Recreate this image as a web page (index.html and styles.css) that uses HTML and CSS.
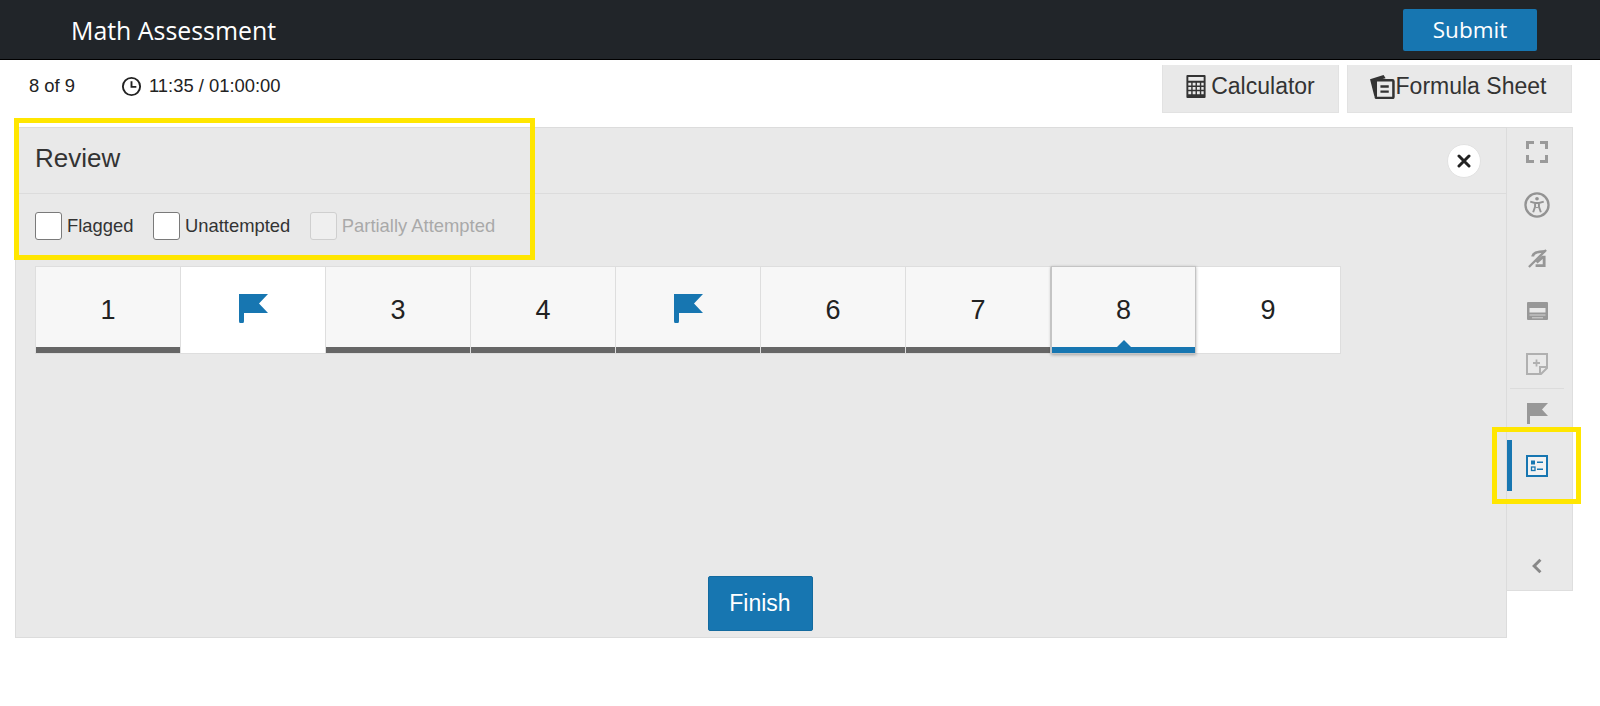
FILE: index.html
```html
<!DOCTYPE html>
<html lang="en">
<head>
<meta charset="UTF-8">
<title>Math Assessment</title>
<link rel="stylesheet" href="styles.css">
</head>
<body>
	<header class="topbar">
		<h1 class="test-name">Math Assessment</h1>
		<button class="btn-submit">Submit</button>
	</header>

	<div class="toolbar">
		<div class="progress">
			<span class="count">8 of 9</span>
			<svg class="clock" viewBox="0 0 20 20"><circle cx="10" cy="10" r="8.2" fill="none" stroke="#222" stroke-width="1.8"/><path d="M10 5v5.400h4.600" fill="none" stroke="#222" stroke-width="1.8"/></svg>
			<span>11:35 / 01:00:00</span>
		</div>
		<div class="tools">
			<button class="tool-btn calc">
				<svg class="tool-icon" viewBox="0 0 20 24"><path fill="#333" fill-rule="evenodd" d="M1 0h18a1 1 0 0 1 1 1v22a1 1 0 0 1-1 1H1a1 1 0 0 1-1-1V1a1 1 0 0 1 1-1zm1 2v4h16V2zm0 6v3h3V8zm4.500 0v3h3V8zm4.500 0v3h3V8zm4.500 0v3H18V8zM2 12.500v3h3v-3zm4.500 0v3h3v-3zm4.500 0v3h3v-3zm4.500 0v3H18v-3zM2 17v3h3v-3zm4.500 0v3h3v-3zm4.500 0v3h3v-3zm4.500 0v3H18v-3z"/></svg>
				Calculator
			</button>
			<button class="tool-btn formula">
				<svg class="tool-icon wide" viewBox="0 0 25 24"><path fill="#333" d="M1 5l13-4 2 3-10 2.500V21H5z"/><rect x="6.500" y="6" width="17" height="17" rx="1" fill="#e9e9e9" stroke="#333" stroke-width="2.400"/><path d="M11 12h8M11 17h8" stroke="#333" stroke-width="2.200"/></svg>
				Formula Sheet
			</button>
		</div>
	</div>

	<div class="workspace">
		<section class="review">
			<div class="review-head">
				<h2>Review</h2>
				<button class="close">
					<svg viewBox="0 0 14 14"><path d="M2 2l10 10M12 2L2 12" stroke="#222" stroke-width="3" stroke-linecap="round"/></svg>
				</button>
			</div>
			<div class="filters">
				<label class="filter"><span class="box"></span>Flagged</label>
				<label class="filter"><span class="box"></span>Unattempted</label>
				<label class="filter off"><span class="box"></span>Partially Attempted</label>
			</div>
			<div class="tiles">
				<div class="tile done">1</div>
				<div class="tile"><svg class="flag" viewBox="0 0 29 29"><path fill="#1776b1" d="M0 0h29l-9 9.500 9 9.500H5v8a2.500 2.500 0 0 1-5 0z"/></svg></div>
				<div class="tile done">3</div>
				<div class="tile done">4</div>
				<div class="tile done"><svg class="flag" viewBox="0 0 29 29"><path fill="#1776b1" d="M0 0h29l-9 9.500 9 9.500H5v8a2.500 2.500 0 0 1-5 0z"/></svg></div>
				<div class="tile done">6</div>
				<div class="tile done">7</div>
				<div class="tile current">8</div>
				<div class="tile">9</div>
			</div>
			<div class="finish-row">
				<button class="btn-finish">Finish</button>
			</div>
		</section>

		<aside class="rail">
			<div class="rail-item">
				<svg viewBox="0 0 22 22" fill="none" stroke="#9a9a9a" stroke-width="3"><path d="M1.500 8V1.500H8M14 1.500h6.500V8M1.500 14v6.500H8M14 20.500h6.500V14"/></svg>
			</div>
			<div class="rail-item">
				<svg class="big" viewBox="0 0 27 27"><circle cx="13.500" cy="13.500" r="12" fill="none" stroke="#939393" stroke-width="2.400"/><circle cx="13.500" cy="7" r="1.900" fill="#939393"/><path d="M6.500 10l5 1.500v4L9.500 21M20.500 10l-5 1.500v4l2 5.500M11.500 11.500h4M13.500 15.500v1" fill="none" stroke="#939393" stroke-width="2"/></svg>
			</div>
			<div class="rail-item">
				<svg class="slim" viewBox="0 0 20 20" fill="none" stroke="#969696"><path d="M5 8C5 4 9 2.500 18 2.500" stroke-width="3"/><path d="M1 19L19 1" stroke-width="2.400"/><path d="M8 17.500h9V7M9 14l7-6" stroke-width="3"/></svg>
			</div>
			<div class="rail-item">
				<svg class="wide" viewBox="0 0 21 18"><rect width="21" height="18" rx="1" fill="#989898"/><rect x="2.500" y="6" width="16" height="4.500" fill="#e9e9e9"/><path d="M2.500 13h16M5 15.800h11" stroke="#d4d4d4" stroke-width="1"/></svg>
			</div>
			<div class="rail-item">
				<svg viewBox="0 0 22 22" fill="none" stroke="#b0b0b0" stroke-width="2"><path d="M1 1h20v14l-6 6H1zM21 14h-7v7"/><path d="M10.500 6.500v7M7 10h7" stroke-width="1.800"/></svg>
			</div>
			<div class="rail-item flagged">
				<svg viewBox="0 0 21 21"><path fill="#989898" d="M0 0h21l-6 6.500 6 6.500H3v8H0z"/></svg>
			</div>
			<div class="rail-item active">
				<svg viewBox="0 0 22 22"><rect x="1" y="1" width="20" height="20" fill="#f2f2f2" stroke="#1776b1" stroke-width="2"/><path fill="#1776b1" d="M5 5.500h4v4H5zM11 6.500h6v1.500h-6zM11 13.500h6V15h-6z"/><rect x="5.500" y="12" width="3.500" height="3.500" fill="none" stroke="#1776b1" stroke-width="1.300"/></svg>
			</div>
			<div class="rail-item collapse">
				<svg viewBox="0 0 10 14" fill="none" stroke="#888" stroke-width="2.600"><path d="M8 1.500L2.500 7 8 12.500"/></svg>
			</div>
		</aside>
	</div>

	<div class="callout callout-review"></div>
	<div class="callout callout-rail"></div>
</body>
</html>
```

FILE: styles.css
```css
* {
	box-sizing: border-box;
}
body {
	margin: 0;
	background-color: #fff;
	color: #222;
	font-family: "Liberation Sans", Arial, sans-serif;
	overflow: hidden;
}
button {
	font-family: inherit;
	cursor: pointer;
}

/* top bar */
.topbar {
	height: 60px;
	background-color: #212529;
	border-bottom: 1px solid #000;
	display: flex;
	align-items: center;
	justify-content: space-between;
	padding: 0 63px 0 71px;
}
.test-name {
	margin: 0;
	color: #fff;
	font-family: "Open Sans", sans-serif;
	font-size: 24.9px;
	font-weight: 400;
}
.btn-submit {
	width: 134px;
	height: 42px;
	border: none;
	border-radius: 2px;
	background-color: #1776b1;
	color: #fff;
	font-family: "Open Sans", sans-serif;
	font-size: 22.5px;
}

/* progress and tools */
.toolbar {
	height: 67px;
	display: flex;
	justify-content: space-between;
	padding: 0 28px 0 29px;
}
.progress {
	height: 52px;
	display: flex;
	align-items: center;
	font-size: 18.4px;
}
.count {
	width: 92px;
}
.clock {
	width: 21px;
	height: 21px;
	margin-right: 7px;
}
.tools {
	display: flex;
	gap: 8px;
}
.tool-btn {
	height: 48px;
	margin-top: 5px;
	padding: 0 0 5px;
	border: 1px solid #e2e2e2;
	border-top: none;
	background-color: #e9e9e9;
	color: #333;
	font-size: 23px;
	display: flex;
	align-items: center;
	justify-content: center;
}
.calc {
	width: 177px;
}
.formula {
	width: 225px;
	padding-right: 4px;
}
.tool-icon {
	width: 20px;
	height: 23px;
	margin-right: 5px;
}
.tool-icon.wide {
	width: 26px;
	height: 25px;
	margin-right: 1px;
}

/* review panel */
.workspace {
	display: flex;
	align-items: flex-start;
	padding-left: 15px;
}
.review {
	width: 1492px;
	height: 511px;
	background-color: #e9e9e9;
	border: 1px solid #dcdcdc;
	display: flex;
	flex-direction: column;
}
.review-head {
	height: 66px;
	padding: 0 25px 5px 19px;
	border-bottom: 1px solid #dcdcdc;
	display: flex;
	align-items: center;
	justify-content: space-between;
}
.review-head h2 {
	margin: 0;
	color: #333;
	font-size: 26px;
	font-weight: 400;
}
.close {
	width: 34px;
	height: 34px;
	margin-top: 5px;
	padding: 9px;
	border: 1px solid #e2e2e2;
	border-radius: 50%;
	background-color: #fff;
	display: flex;
}
.filters {
	display: flex;
	align-items: center;
	gap: 19.5px;
	padding: 18px 19px 0;
}
.filter {
	display: flex;
	align-items: center;
	gap: 5px;
	color: #333;
	font-size: 18.4px;
}
.box {
	width: 27px;
	height: 28px;
	border: 1px solid #7a7a7a;
	border-radius: 3px;
	background-color: #fff;
}
.filter.off {
	color: #a9a9a9;
}
.off .box {
	border-color: #cfcfcf;
	background-color: #efefef;
}
.tiles {
	display: flex;
	margin: 26px 0 0 19px;
}
.tile {
	width: 145px;
	height: 88px;
	background-color: #fff;
	border: 1px solid #dedede;
	border-left-width: 0;
	font-size: 27px;
	display: flex;
	align-items: center;
	justify-content: center;
	position: relative;
}
.tile:first-child {
	width: 146px;
	border-left-width: 1px;
}
.tile.done {
	background-color: #f7f7f7;
	box-shadow: inset 0 -6px 0 #666;
}
.tile.current {
	background-color: #f7f7f7;
	border: 1px solid #c4c4c4;
	box-shadow: inset 0 -6px 0 #1776b1, 0 1px 3px rgba(0, 0, 0, 0.3);
	z-index: 1;
}
.tile.current::after {
	content: "";
	position: absolute;
	left: 50%;
	bottom: 6px;
	margin-left: -7px;
	border: 7px solid transparent;
	border-top: none;
	border-bottom-color: #1776b1;
}
.flag {
	width: 29px;
	height: 29px;
	margin-bottom: 4px;
}
.finish-row {
	margin-top: auto;
	padding: 0 2px 6px 0;
	display: flex;
	justify-content: center;
}
.btn-finish {
	width: 105px;
	height: 55px;
	border: 1px solid #136a9f;
	border-radius: 2px;
	background-color: #1776b1;
	color: #fff;
	font-size: 23px;
}

/* side rail */
.rail {
	width: 66px;
	height: 464px;
	padding-right: 5px;
	background-color: #e9e9e9;
	border: 1px solid #dedede;
	border-left-width: 0;
	display: flex;
	flex-direction: column;
	align-items: stretch;
	gap: 5px;
}
.rail-item {
	height: 48px;
	flex-shrink: 0;
	display: flex;
	align-items: center;
	justify-content: center;
	position: relative;
}
.rail-item svg {
	width: 22px;
	height: 22px;
}
.rail-item svg.big {
	width: 26px;
	height: 26px;
}
.rail-item svg.slim {
	width: 19px;
	height: 19px;
}
.rail-item svg.wide {
	width: 21px;
	height: 18px;
}
.rail-item.flagged {
	margin: -5px 3px 0;
	height: 49px;
	border-top: 1px solid #dcdcdc;
}
.rail-item.flagged svg {
	width: 21px;
	height: 21px;
}
.rail-item.active::before {
	content: "";
	position: absolute;
	left: 0;
	top: -2px;
	width: 5px;
	height: 51px;
	background-color: #1776b1;
}
.rail-item.collapse {
	margin-top: auto;
}
.rail-item.collapse svg {
	width: 12px;
	height: 16px;
}

/* yellow annotation frames drawn over the page */
.callout {
	position: absolute;
	border: 5px solid #ffe600;
}
.callout-review {
	left: 14px;
	top: 118px;
	width: 521px;
	height: 142px;
}
.callout-rail {
	left: 1492px;
	top: 427px;
	width: 89px;
	height: 77px;
}
```
